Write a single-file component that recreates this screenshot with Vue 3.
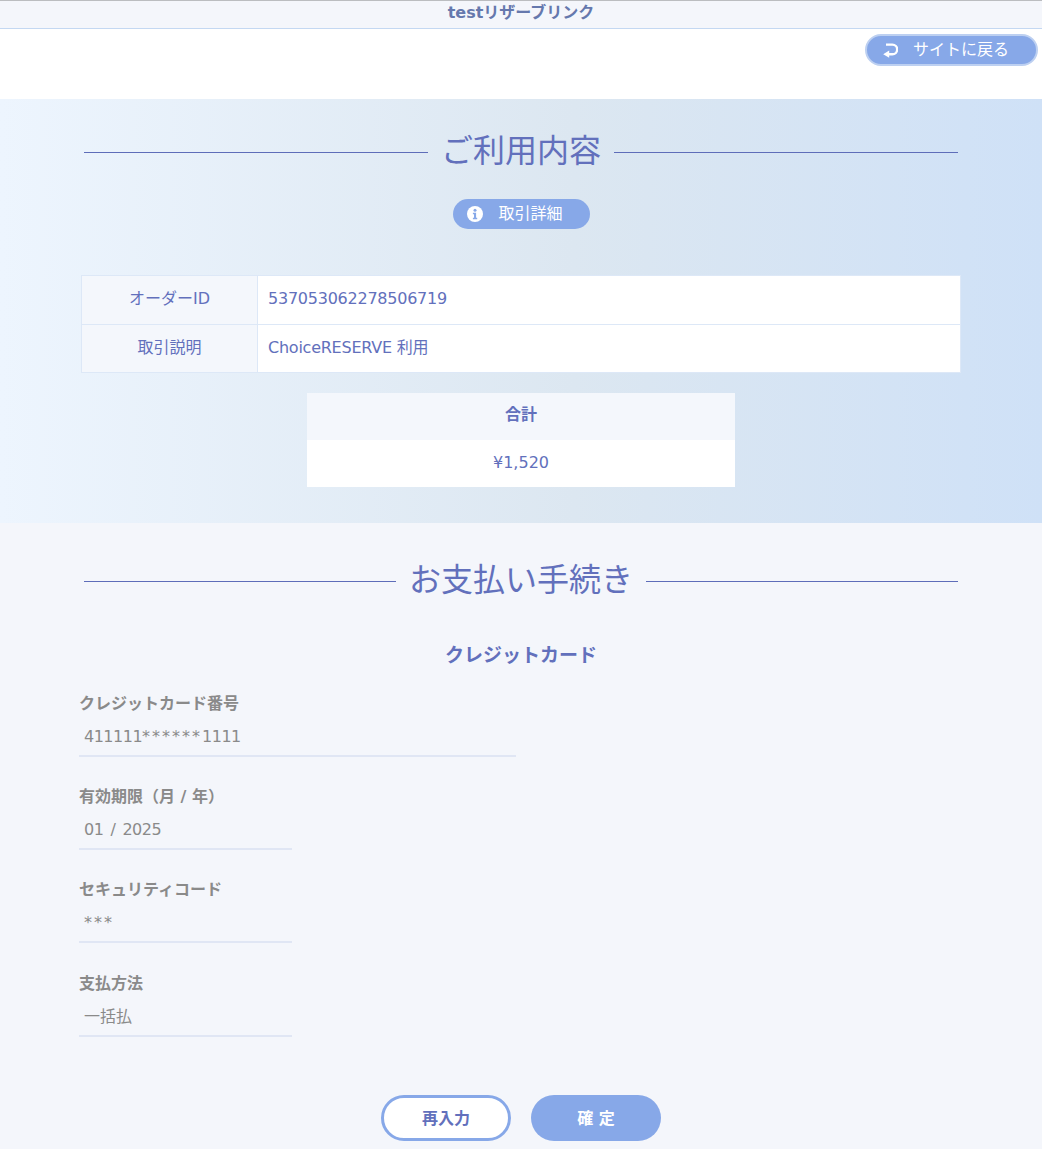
<template>
  <div class="page">
    <header class="top-bar">testリザーブリンク</header>

    <div class="back-row">
      <button type="button" class="back-button">
        <svg class="back-icon" viewBox="0 0 15 15" aria-hidden="true">
          <path d="M3 1.6h6.4a4.8 4.8 0 0 1 0 9.6H5.5" fill="none" stroke="#fff" stroke-width="2.4" />
          <path d="M6.2 7.6v7.2L0.2 11.2z" fill="#fff" />
        </svg>
        <span>サイトに戻る</span>
      </button>
    </div>

    <section class="summary">
      <h2 class="section-title"><span>ご利用内容</span></h2>

      <div class="detail-row">
        <button type="button" class="detail-button">
          <svg class="info-icon" viewBox="0 0 16 16" aria-hidden="true">
            <circle cx="8" cy="8" r="8" fill="#fff" />
            <circle cx="8" cy="4.2" r="1.5" fill="#87a8e8" />
            <path d="M5.9 6.8h3.2v5h1.1v1.5H5.9v-1.5H7v-3.5H5.9z" fill="#87a8e8" />
          </svg>
          <span>取引詳細</span>
        </button>
      </div>

      <table class="info-table">
        <tbody>
          <tr v-for="row in infoRows" :key="row.label">
            <th>{{ row.label }}</th>
            <td>{{ row.value }}</td>
          </tr>
        </tbody>
      </table>

      <div class="total">
        <div class="total-label">合計</div>
        <div class="total-value">¥1,520</div>
      </div>
    </section>

    <section class="payment">
      <h2 class="section-title"><span>お支払い手続き</span></h2>
      <h3 class="card-title">クレジットカード</h3>

      <div v-for="field in fields" :key="field.label" class="field">
        <div class="field-label">{{ field.label }}</div>
        <div class="field-value" :class="{ wide: field.wide, numeric: field.numeric }">
          <span
            v-for="(part, i) in splitMask(field.value)"
            :key="i"
            :class="{ mask: part.startsWith('*') }"
          >{{ part }}</span>
        </div>
      </div>

      <div class="actions">
        <button type="button" class="btn btn-reset">再入力</button>
        <button type="button" class="btn btn-submit">確 定</button>
      </div>
    </section>
  </div>
</template>

<script setup>
const infoRows = [
  { label: 'オーダーID', value: '537053062278506719' },
  { label: '取引説明', value: 'ChoiceRESERVE 利用' },
]

const fields = [
  { label: 'クレジットカード番号', value: '411111******1111', wide: true, numeric: true },
  { label: '有効期限（月 / 年）', value: '01 / 2025', numeric: true },
  { label: 'セキュリティコード', value: '***', numeric: true },
  { label: '支払方法', value: '一括払' },
]

// asterisks are wider in the card value than the digits around them
const splitMask = (value) => value.split(/(\*+)/).filter(Boolean)
</script>

<style>
body {
  background: #f4f6fb;
}
</style>

<style scoped>
.page {
  font-family: "DejaVu Sans", "Noto Sans CJK JP", sans-serif;
  font-size: 16px;
  color: #6270bc;
}

.top-bar {
  height: 29px;
  box-sizing: border-box;
  border-top: 1px solid #bbbdc0;
  border-bottom: 1px solid #c4d8f2;
  background: #f4f6fb;
  color: #6578ad;
  font-size: 16px;
  font-weight: 700;
  line-height: 23px;
  text-align: center;
}

.back-row {
  display: flex;
  justify-content: flex-end;
  height: 70px;
  padding: 5px 4px 0 0;
  box-sizing: border-box;
  background: white;
}

.back-button {
  display: flex;
  align-items: center;
  width: 173px;
  height: 32px;
  padding: 0 0 4px 16px;
  border: 2px solid #bdd0f1;
  border-radius: 16px;
  background: #87a8e8;
  color: white;
  font: inherit;
}

.back-icon {
  width: 15px;
  height: 15px;
  margin: 4px 15px 0 0;
}

.summary {
  height: 424px;
  padding-top: 29px;
  box-sizing: border-box;
  background: linear-gradient(90deg, #edf5fe 0%, #dce7f1 55%, #cfe1f7 100%);
}

.section-title {
  display: flex;
  align-items: center;
  gap: 13px;
  height: 48px;
  margin: 0 84px;
  color: #6270bc;
  font-size: 32px;
  font-weight: 400;
  line-height: 48px;
  white-space: nowrap;
}

.section-title span {
  margin-bottom: 2px;
}

.section-title::before,
.section-title::after {
  content: "";
  flex: 1;
  border-top: 1px solid #5e6db9;
}

.detail-row {
  display: flex;
  justify-content: center;
  margin-top: 23px;
}

.detail-button {
  display: flex;
  align-items: center;
  width: 137px;
  height: 30px;
  padding: 0 0 0 14px;
  border: 0;
  border-radius: 15px;
  background: #87a8e8;
  color: white;
  font: inherit;
}

.detail-button span {
  margin-bottom: 4px;
}

.info-icon {
  width: 16px;
  height: 16px;
  margin-right: 16px;
}

.info-table {
  width: 880px;
  margin: 46px 0 0 81px;
  border-collapse: collapse;
  table-layout: fixed;
}

.info-table th,
.info-table td {
  height: 48px;
  border: 1px solid #dde8f7;
  font-weight: 400;
  box-sizing: border-box;
}

.info-table tr:first-child th,
.info-table tr:first-child td {
  height: 49px;
}

.info-table th {
  width: 176px;
  padding: 0 10px 6px;
  background: #f4f7fc;
  text-align: center;
}

.info-table td {
  padding: 0 10px 3px;
  background: white;
  letter-spacing: -0.24px;
  text-align: left;
}

.info-table tr:last-child td {
  padding-bottom: 5px;
}

.total {
  width: 428px;
  margin: 20px auto 0;
  text-align: center;
}

.total-label {
  height: 47px;
  background: #f4f7fc;
  font-weight: 700;
  line-height: 43px;
}

.total-value {
  height: 47px;
  background: white;
  line-height: 46px;
}

.payment {
  padding: 34px 0 8px;
}

.card-title {
  margin: 36px 0 0;
  font-size: 19px;
  font-weight: 700;
  line-height: 28px;
  text-align: center;
}

.field {
  width: 437px;
  margin: 0 0 0 79px;
  padding-top: 28px;
}

.card-title + .field {
  padding-top: 23px;
}

.field:nth-last-child(2) {
  padding-top: 29px;
}

.field-label {
  color: #8a8a8a;
  font-weight: 700;
  line-height: 24px;
}

.field-value {
  width: 213px;
  height: 41px;
  padding: 9px 0 0 5px;
  box-sizing: border-box;
  border-bottom: 2px solid #e0e6f4;
  color: #8a8a8a;
  line-height: 24px;
}

.field-value.wide {
  width: 437px;
}

.field-value.numeric {
  letter-spacing: -0.5px;
  word-spacing: 2.5px;
}

.mask {
  letter-spacing: 2px;
}

.actions {
  display: flex;
  justify-content: center;
  gap: 20px;
  margin-top: 58px;
}

.btn {
  width: 130px;
  height: 46px;
  padding: 0 0 2px;
  border-radius: 23px;
  font: inherit;
  font-weight: 700;
}

.btn-reset {
  border: 3px solid #87a8e8;
  background: white;
  color: #6270bc;
}

.btn-submit {
  border: 0;
  background: #87a8e8;
  color: white;
}
</style>
